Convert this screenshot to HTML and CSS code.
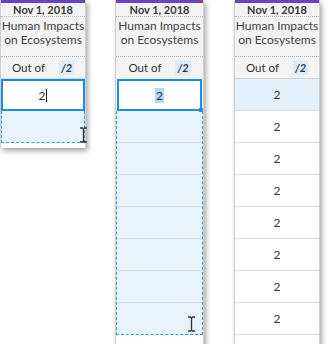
FILE: index.html
```html
<!DOCTYPE html>
<html lang="en">
<head>
    <meta charset="UTF-8">
    <meta name="viewport" content="width=device-width, initial-scale=1.0">
    <title>Gradebook column fill</title>
    <link rel="stylesheet" href="styles.css">
</head>
<body>

<div class="strip">

    <!-- step 1: typing in the first cell -->
    <div class="col col-one">
        <div class="col-head">
            <div class="col-date">Nov 1, 2018</div>
            <div class="col-title">Human Impacts<br>on Ecosystems</div>
            <div class="col-out"><span>Out of</span><span class="out-max">/2</span></div>
        </div>
        <div class="cell cell-input">2<span class="caret"></span></div>
        <div class="sel-area">
            <div class="cell"></div>
        </div>
        <div class="cell-tail short"></div>
        <svg class="ibeam ibeam-one" width="9" height="16" viewBox="0 0 9 16">
            <path d="M1 1h2.5l1 1 1-1H8M4.5 2v12M1 15h2.5l1-1 1 1H8" fill="none" stroke="#333" stroke-width="1.3"/>
        </svg>
    </div>

    <!-- step 2: dragging down the column -->
    <div class="col col-two">
        <div class="col-head">
            <div class="col-date">Nov 1, 2018</div>
            <div class="col-title">Human Impacts<br>on Ecosystems</div>
            <div class="col-out"><span>Out of</span><span class="out-max">/2</span></div>
        </div>
        <div class="cell cell-input"><span class="picked">2</span><span class="handle"></span></div>
        <div class="sel-area">
            <div class="cell"></div>
            <div class="cell"></div>
            <div class="cell"></div>
            <div class="cell"></div>
            <div class="cell"></div>
            <div class="cell"></div>
            <div class="cell"></div>
        </div>
        <div class="cell-tail"></div>
        <svg class="ibeam ibeam-two" width="9" height="16" viewBox="0 0 9 16">
            <path d="M1 1h2.5l1 1 1-1H8M4.5 2v12M1 15h2.5l1-1 1 1H8" fill="none" stroke="#333" stroke-width="1.3"/>
        </svg>
    </div>

    <!-- step 3: filled -->
    <div class="col col-three">
        <div class="col-head">
            <div class="col-date">Nov 1, 2018</div>
            <div class="col-title">Human Impacts<br>on Ecosystems</div>
            <div class="col-out"><span>Out of</span><span class="out-max">/2</span></div>
        </div>
        <div class="cell cell-active">2</div>
        <div class="cell">2</div>
        <div class="cell">2</div>
        <div class="cell">2</div>
        <div class="cell">2</div>
        <div class="cell">2</div>
        <div class="cell">2</div>
        <div class="cell">2</div>
        <div class="cell-tail"></div>
    </div>

</div>

</body>
</html>
```

FILE: styles.css
```css
body {
    margin: 0;
    background-color: #ffffff;
    font-family: Lato, "Open Sans", sans-serif;
    color: #333333;
}
.strip {
    display: flex;
    align-items: flex-start;
}
.col {
    position: relative;
    background-color: #ffffff;
    border-left: 1px solid #cfcfcf;
    border-right: 1px solid #cfcfcf;
    box-shadow: 2px 3px 5px rgba(0, 0, 0, 0.35);
}
.col-one {
    width: 84px;
}
.col-two {
    width: 87px;
    margin-left: 29px;
}
.col-three {
    width: 84px;
    margin-left: 30px;
}
.col-head {
    background-color: #f3f3f3;
    border-top: 3px solid #6c42c4;
    border-bottom: 1px solid #d4d4d4;
    text-align: center;
}
.col-two .col-head {
    border-image: linear-gradient(to left, #c0392b 3px, #6c42c4 3px) 1;
    border-image-width: 3px 0 0 0;
}
.col-date {
    height: 13px;
    line-height: 13px;
    font-size: 11px;
    font-weight: bold;
    color: #3a3a3a;
    border-bottom: 1px dotted #b5b5b5;
}
.col-title {
    height: 37px;
    padding-top: 2px;
    font-size: 12px;
    line-height: 14px;
    color: #444444;
    border-bottom: 1px dotted #b5b5b5;
}
.col-out {
    height: 21px;
    display: flex;
    align-items: center;
    justify-content: center;
    gap: 14px;
    font-size: 11.5px;
    color: #333333;
}
.out-max {
    background-color: #dcecf9;
    padding: 1px 2px;
    font-size: 11px;
    font-weight: bold;
    font-style: italic;
    color: #2f3b48;
}
.cell {
    box-sizing: border-box;
    height: 32px;
    border-bottom: 1px solid #dadada;
    display: flex;
    align-items: center;
    justify-content: center;
    font-size: 12px;
    color: #333333;
}
.cell-input {
    position: relative;
    border: 2px solid #1d8ce6;
    background-color: #ffffff;
}
.col-two .cell-input {
    margin: 0 1px;
}
.caret {
    width: 1px;
    height: 13px;
    margin-left: 1px;
    background-color: #222222;
}
.picked {
    background-color: #b7d7f4;
    padding: 0 1px;
}
.handle {
    position: absolute;
    right: -3px;
    bottom: -3px;
    width: 4px;
    height: 4px;
    background-color: #1d8ce6;
}
.sel-area {
    background-color: #e7f3fd;
    border: 1px dashed #3b96e2;
    border-top: none;
}
.sel-area .cell:last-child {
    border-bottom: none;
    height: 31px;
}
.cell-active {
    background-color: #e3f1fc;
}
.cell-tail {
    height: 9px;
    background-color: #ffffff;
}
.cell-tail.short {
    height: 5px;
}
.ibeam {
    position: absolute;
}
.ibeam-one {
    left: 78px;
    top: 127px;
}
.ibeam-two {
    left: 71px;
    top: 316px;
}
```
